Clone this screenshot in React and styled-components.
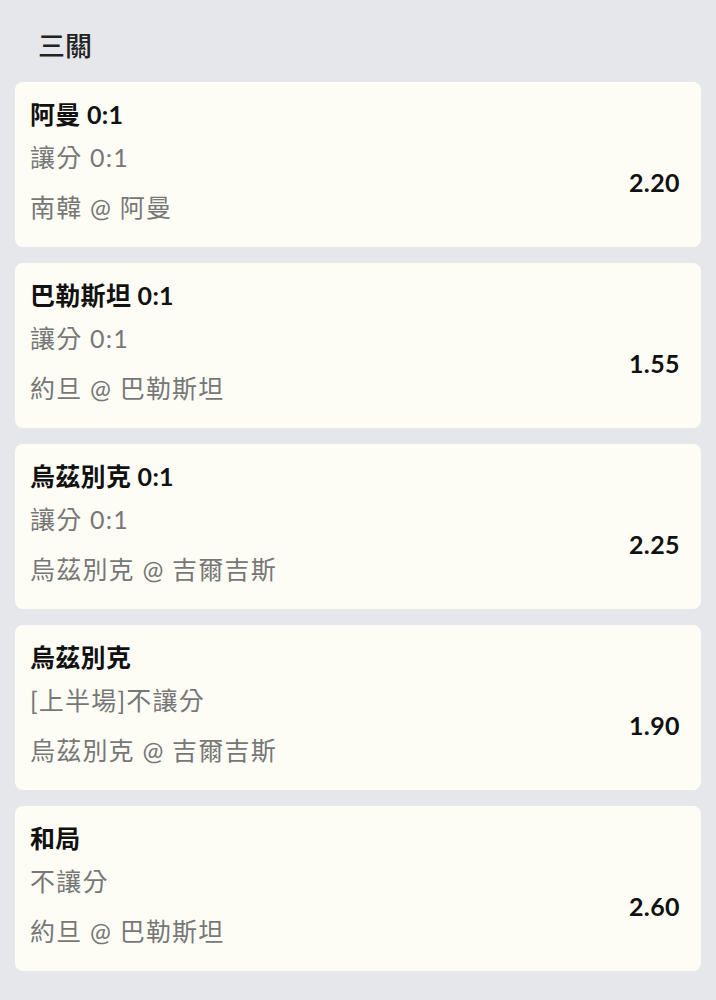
import React from 'react'
import styled, { createGlobalStyle } from 'styled-components'

const GlobalStyle = createGlobalStyle`
  body {
    margin: 0;
    background: #e6e7ea;
    font-family: Lato, "Noto Sans CJK TC", sans-serif;
  }
`

const Page = styled.div`
  padding: 0 15px 30px;
`

const Heading = styled.h1`
  margin: 0 0 18px;
  padding: 28px 0 0 23px;
  font-size: 27px;
  line-height: 36px;
  font-weight: 500;
  color: #222;
`

const List = styled.div`
  display: flex;
  flex-direction: column;
  gap: 16px;
`

const Card = styled.div`
  background: #fdfdf6;
  border-radius: 8px;
  padding: 17px 21px 22px 15px;
`

const Title = styled.div`
  font-size: 25px;
  line-height: 30px;
  font-weight: 700;
  letter-spacing: 0.3px;
  color: #111;
`

const Body = styled.div`
  display: flex;
  align-items: center;
  justify-content: space-between;
  margin-top: 10px;
`

const Lines = styled.div`
  display: flex;
  flex-direction: column;
  gap: 14px;
`

const Line = styled.div`
  font-size: 25px;
  line-height: 36px;
  letter-spacing: 1.2px;
  color: #777;
`

const Odds = styled.div`
  font-size: 25px;
  font-weight: 700;
  letter-spacing: 0.4px;
  color: #111;
`

const bets = [
  { title: '阿曼 0:1', market: '讓分 0:1', match: '南韓 @ 阿曼', odds: '2.20' },
  { title: '巴勒斯坦 0:1', market: '讓分 0:1', match: '約旦 @ 巴勒斯坦', odds: '1.55' },
  { title: '烏茲別克 0:1', market: '讓分 0:1', match: '烏茲別克 @ 吉爾吉斯', odds: '2.25' },
  { title: '烏茲別克', market: '[上半場]不讓分', match: '烏茲別克 @ 吉爾吉斯', odds: '1.90' },
  { title: '和局', market: '不讓分', match: '約旦 @ 巴勒斯坦', odds: '2.60' },
]

export default function App() {
  return (
    <Page>
      <GlobalStyle />
      <Heading>三關</Heading>
      <List>
        {bets.map((b, i) => (
          <Card key={i}>
            <Title>{b.title}</Title>
            <Body>
              <Lines>
                <Line>{b.market}</Line>
                <Line>{b.match}</Line>
              </Lines>
              <Odds>{b.odds}</Odds>
            </Body>
          </Card>
        ))}
      </List>
    </Page>
  )
}
